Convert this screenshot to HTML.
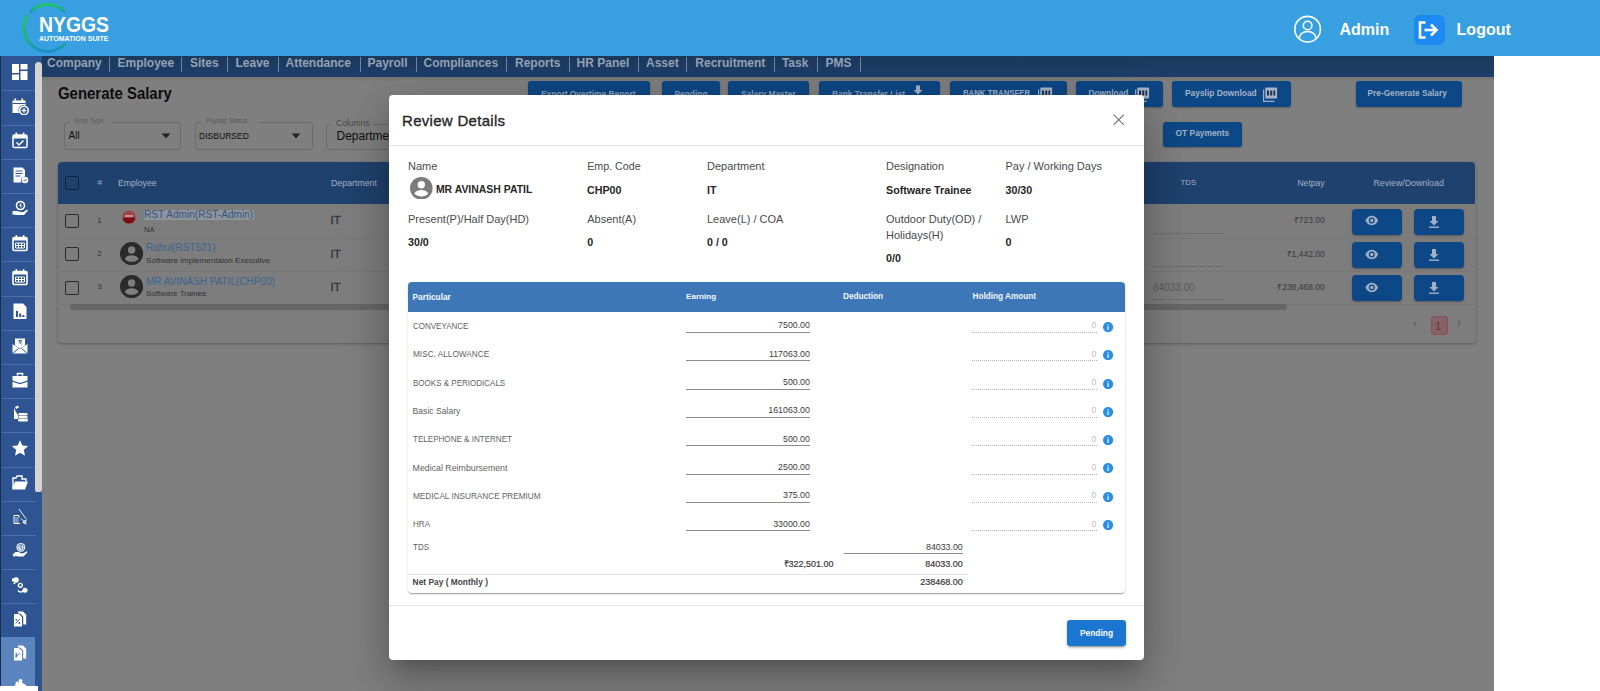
<!DOCTYPE html>
<html><head><meta charset="utf-8">
<style>
*{box-sizing:border-box;margin:0;padding:0}
html,body{width:1600px;height:691px;overflow:hidden;background:#fff;font-family:"Liberation Sans",sans-serif}
.a{position:absolute}
.t{position:absolute;white-space:nowrap;line-height:1}
#hdr{left:0;top:0;width:1600px;height:56px;background:#38a0e1}
#side{left:0;top:56px;width:42px;height:630px;background:#2e5491;border-left:1px solid #1b2b4d;overflow:hidden}
.sc{position:absolute;left:1px;width:34px;height:1px;background:#4b73a8}
.si{position:absolute;left:9.6px;width:18px;height:18px}
#thumb{left:35px;top:62px;width:7px;height:430px;background:#d6d2d1;border-radius:4px 4px 3px 3px}
</style></head><body>
<div id="hdr" class="a">
  <svg class="a" style="left:0;top:0" width="130" height="56" viewBox="0 0 130 56">
    <defs><linearGradient id="lg" x1="0" y1="0" x2="0" y2="1"><stop offset="0" stop-color="#20c46c"/><stop offset="0.65" stop-color="#1bb478"/><stop offset="1" stop-color="#1a8fc6"/></linearGradient></defs>
    <path d="M63.82 11.1 A23.5 23.5 0 0 0 30.88 11.38" fill="none" stroke="url(#lg)" stroke-width="3" stroke-linecap="round"/>
    <path d="M27.15 16.25 A23.5 23.5 0 0 0 64.69 44.03" fill="none" stroke="url(#lg)" stroke-width="3" stroke-linecap="round"/>
  </svg>
  <div class="t" style="left:38.9px;top:13.9px;font-size:22.5px;font-weight:bold;color:#fff;transform:scaleX(0.861);transform-origin:0 0">NYGGS</div>
  <div class="t" style="left:39px;top:35px;font-size:7px;font-weight:bold;color:#fff">AUTOMATION SUITE</div>
  <svg class="a" style="left:1293px;top:15px" width="30" height="30" viewBox="0 0 30 30">
    <circle cx="14.6" cy="14.2" r="12.8" fill="none" stroke="#fff" stroke-width="1.6"/>
    <circle cx="14.6" cy="10.5" r="4.3" fill="none" stroke="#fff" stroke-width="1.6"/>
    <path d="M6 23.5 C7 18.5 10.5 16.5 14.6 16.5 C18.7 16.5 22.2 18.5 23.2 23.5" fill="none" stroke="#fff" stroke-width="1.6"/>
  </svg>
  <div class="t" style="left:1339.4px;top:21.8px;font-size:16px;font-weight:bold;color:#fff">Admin</div>
  <div class="a" style="left:1413.5px;top:14.5px;width:31px;height:30px;background:#1d8af3;border-radius:6px"></div>
  <svg class="a" style="left:1413.5px;top:14.5px" width="31" height="30" viewBox="0 0 31 30">
    <path d="M11.5 7.5 H6 V22.5 H11.5" fill="none" stroke="#fff" stroke-width="2.6"/>
    <path d="M10.5 15 H21" fill="none" stroke="#fff" stroke-width="2.6"/>
    <path d="M17 9.5 L22.5 15 L17 20.5" fill="none" stroke="#fff" stroke-width="2.6"/>
  </svg>
  <div class="t" style="left:1456.6px;top:21.8px;font-size:16px;font-weight:bold;color:#fff">Logout</div>
</div>
<div class="a" style="left:42.0px;top:56.0px;width:1452.0px;height:635.0px;background:#7f7f7f"></div>
<div class="a" style="left:42.0px;top:76.5px;width:1452.0px;height:4.0px;background:linear-gradient(#737374,#7f7f7f)"></div>
<div class="a" style="left:42.0px;top:56.0px;width:1452.0px;height:20.5px;background:linear-gradient(#1b395a,#1e3e6c)"></div>
<div class="t" style="left:47.0px;top:57.1px;font-size:12px;font-weight:bold;color:#93a2b5;">Company</div>
<div class="t" style="left:117.5px;top:57.1px;font-size:12px;font-weight:bold;color:#93a2b5;">Employee</div>
<div class="t" style="left:190.0px;top:57.1px;font-size:12px;font-weight:bold;color:#93a2b5;">Sites</div>
<div class="t" style="left:235.5px;top:57.1px;font-size:12px;font-weight:bold;color:#93a2b5;">Leave</div>
<div class="t" style="left:285.5px;top:57.1px;font-size:12px;font-weight:bold;color:#93a2b5;">Attendance</div>
<div class="t" style="left:367.5px;top:57.1px;font-size:12px;font-weight:bold;color:#93a2b5;">Payroll</div>
<div class="t" style="left:423.5px;top:57.1px;font-size:12px;font-weight:bold;color:#93a2b5;">Compliances</div>
<div class="t" style="left:515.0px;top:57.1px;font-size:12px;font-weight:bold;color:#93a2b5;">Reports</div>
<div class="t" style="left:576.6px;top:57.1px;font-size:12px;font-weight:bold;color:#93a2b5;">HR Panel</div>
<div class="t" style="left:646.0px;top:57.1px;font-size:12px;font-weight:bold;color:#93a2b5;">Asset</div>
<div class="t" style="left:695.3px;top:57.1px;font-size:12px;font-weight:bold;color:#93a2b5;">Recruitment</div>
<div class="t" style="left:781.9px;top:57.1px;font-size:12px;font-weight:bold;color:#93a2b5;">Task</div>
<div class="t" style="left:825.6px;top:57.1px;font-size:12px;font-weight:bold;color:#93a2b5;">PMS</div>
<div class="a" style="left:109.2px;top:57.0px;width:1.0px;height:15.0px;background:#6f86a3"></div>
<div class="a" style="left:181.2px;top:57.0px;width:1.0px;height:15.0px;background:#6f86a3"></div>
<div class="a" style="left:227.0px;top:57.0px;width:1.0px;height:15.0px;background:#6f86a3"></div>
<div class="a" style="left:277.5px;top:57.0px;width:1.0px;height:15.0px;background:#6f86a3"></div>
<div class="a" style="left:359.5px;top:57.0px;width:1.0px;height:15.0px;background:#6f86a3"></div>
<div class="a" style="left:415.5px;top:57.0px;width:1.0px;height:15.0px;background:#6f86a3"></div>
<div class="a" style="left:506.2px;top:57.0px;width:1.0px;height:15.0px;background:#6f86a3"></div>
<div class="a" style="left:568.8px;top:57.0px;width:1.0px;height:15.0px;background:#6f86a3"></div>
<div class="a" style="left:637.5px;top:57.0px;width:1.0px;height:15.0px;background:#6f86a3"></div>
<div class="a" style="left:686.2px;top:57.0px;width:1.0px;height:15.0px;background:#6f86a3"></div>
<div class="a" style="left:773.8px;top:57.0px;width:1.0px;height:15.0px;background:#6f86a3"></div>
<div class="a" style="left:817.2px;top:57.0px;width:1.0px;height:15.0px;background:#6f86a3"></div>
<div class="a" style="left:860.3px;top:57.0px;width:1.0px;height:15.0px;background:#6f86a3"></div>
<div class="t" style="left:58.0px;top:86.1px;font-size:16px;font-weight:bold;color:#0c0c0c;transform:scaleX(0.934);transform-origin:0 0">Generate Salary</div>
<div class="a" style="left:528.0px;top:81.0px;width:122.0px;height:26.0px;background:#0d4785;border-radius:3px;box-shadow:0 1px 2px rgba(0,0,0,.25)"></div>
<div class="a" style="left:662.0px;top:81.0px;width:57.5px;height:26.0px;background:#0d4785;border-radius:3px;box-shadow:0 1px 2px rgba(0,0,0,.25)"></div>
<div class="a" style="left:728.0px;top:81.0px;width:81.0px;height:26.0px;background:#0d4785;border-radius:3px;box-shadow:0 1px 2px rgba(0,0,0,.25)"></div>
<div class="a" style="left:819.0px;top:81.0px;width:121.0px;height:26.0px;background:#0d4785;border-radius:3px;box-shadow:0 1px 2px rgba(0,0,0,.25)"></div>
<div class="a" style="left:949.5px;top:81.0px;width:117.5px;height:26.0px;background:#0d4785;border-radius:3px;box-shadow:0 1px 2px rgba(0,0,0,.25)"></div>
<div class="a" style="left:1076.0px;top:81.0px;width:86.5px;height:26.0px;background:#0d4785;border-radius:3px;box-shadow:0 1px 2px rgba(0,0,0,.25)"></div>
<div class="a" style="left:1172.0px;top:81.0px;width:119.0px;height:26.0px;background:#0d4785;border-radius:3px;box-shadow:0 1px 2px rgba(0,0,0,.25)"></div>
<div class="a" style="left:1356.0px;top:81.0px;width:106.0px;height:26.0px;background:#0d4785;border-radius:3px;box-shadow:0 1px 2px rgba(0,0,0,.25)"></div>
<div class="a" style="left:1163.0px;top:122.0px;width:79.0px;height:25.0px;background:#0d4785;border-radius:3px;box-shadow:0 1px 2px rgba(0,0,0,.25)"></div>
<div class="t" style="left:1185.0px;top:89.3px;font-size:8.4px;font-weight:bold;color:#a2b2c7;">Payslip Download</div>
<div class="t" style="left:1175.6px;top:129.2px;font-size:8.4px;font-weight:bold;color:#a2b2c7;">OT Payments</div>
<div class="t" style="left:1367.5px;top:89.4px;font-size:8.3px;font-weight:bold;color:#a2b2c7;">Pre-Generate Salary</div>
<div class="t" style="left:1088.4px;top:89.3px;font-size:8.4px;font-weight:bold;color:#a2b2c7;">Download</div>
<div class="t" style="left:962.5px;top:89.3px;font-size:8.4px;font-weight:bold;color:#a2b2c7;transform:scaleX(0.93);transform-origin:0 0">BANK TRANSFER</div>
<div class="t" style="left:541.0px;top:89.7px;font-size:8.4px;font-weight:bold;color:#8d9eb5;">Export Overtime Report</div>
<div class="t" style="left:674.5px;top:89.7px;font-size:8.4px;font-weight:bold;color:#8d9eb5;">Pending</div>
<div class="t" style="left:741.0px;top:89.7px;font-size:8.4px;font-weight:bold;color:#8d9eb5;">Salary Master</div>
<div class="t" style="left:832.0px;top:89.7px;font-size:8.4px;font-weight:bold;color:#8d9eb5;">Bank Transfer List</div>
<svg class="a" style="left:913px;top:85px" width="10" height="12" viewBox="0 0 10 12"><path d="M3 0.5 h4 v4.5 h2.5 l-4.5 4.5 l-4.5 -4.5 h2.5 z" fill="#a2b2c7"/><rect x="0.5" y="10.3" width="9" height="1.4" fill="#a2b2c7"/></svg>
<svg class="a" style="left:1262.6px;top:86.5px" width="15" height="15" viewBox="0 0 15 15"><path d="M0.6 2.5 V14.4 H11.5" fill="none" stroke="#9fb0c6" stroke-width="1.2"/><rect x="2.3" y="0.6" width="11.8" height="10.8" rx="1" fill="#a6b4c8"/><rect x="4" y="3.5" width="2" height="5" fill="#1e3050"/><rect x="7.2" y="3.5" width="2" height="5" fill="#1e3050"/><rect x="10.4" y="3.5" width="1.8" height="5" fill="#1e3050"/></svg>
<svg class="a" style="left:1134.5px;top:86.5px" width="15" height="15" viewBox="0 0 15 15"><path d="M0.6 2.5 V14.4 H11.5" fill="none" stroke="#9fb0c6" stroke-width="1.2"/><rect x="2.3" y="0.6" width="11.8" height="10.8" rx="1" fill="#a6b4c8"/><rect x="4" y="3.5" width="2" height="5" fill="#1e3050"/><rect x="7.2" y="3.5" width="2" height="5" fill="#1e3050"/><rect x="10.4" y="3.5" width="1.8" height="5" fill="#1e3050"/></svg>
<svg class="a" style="left:1037.5px;top:86.5px" width="15" height="15" viewBox="0 0 15 15"><path d="M0.6 2.5 V14.4 H11.5" fill="none" stroke="#9fb0c6" stroke-width="1.2"/><rect x="2.3" y="0.6" width="11.8" height="10.8" rx="1" fill="#a6b4c8"/><rect x="4" y="3.5" width="2" height="5" fill="#1e3050"/><rect x="7.2" y="3.5" width="2" height="5" fill="#1e3050"/><rect x="10.4" y="3.5" width="1.8" height="5" fill="#1e3050"/></svg>
<div class="a" style="left:64.4px;top:122.0px;width:117.0px;height:27.5px;border:1px solid #6c6c6c;border-radius:3px"></div>
<div class="a" style="left:195.0px;top:122.0px;width:118.0px;height:27.5px;border:1px solid #6c6c6c;border-radius:3px"></div>
<div class="a" style="left:325.5px;top:123.5px;width:80.0px;height:26.0px;border:1px solid #6c6c6c;border-radius:3px"></div>
<div class="a" style="left:70.0px;top:120.0px;width:42.0px;height:4.0px;background:#7f7f7f"></div>
<div class="a" style="left:201.0px;top:120.0px;width:58.0px;height:4.0px;background:#7f7f7f"></div>
<div class="t" style="left:74.5px;top:118.0px;font-size:6.5px;font-weight:normal;color:#5a5a5a;">Emp Type</div>
<div class="t" style="left:206.0px;top:118.0px;font-size:6.5px;font-weight:normal;color:#5a5a5a;">Payslip Status</div>
<div class="t" style="left:68.5px;top:130.7px;font-size:10px;font-weight:normal;color:#111;">All</div>
<div class="t" style="left:199.3px;top:131.6px;font-size:9px;font-weight:normal;color:#111;transform:scaleX(0.95);transform-origin:0 0">DISBURSED</div>
<svg class="a" style="left:161px;top:133px" width="10" height="6"><path d="M0.5 0.5 L9.5 0.5 L5 5.2 Z" fill="#222"/></svg>
<svg class="a" style="left:291px;top:133px" width="10" height="6"><path d="M0.5 0.5 L9.5 0.5 L5 5.2 Z" fill="#222"/></svg>
<div class="a" style="left:331.0px;top:121.0px;width:42.0px;height:4.0px;background:#7f7f7f"></div>
<div class="t" style="left:336.0px;top:119.3px;font-size:8.5px;font-weight:normal;color:#4a4a4a;">Columns</div>
<div class="t" style="left:336.5px;top:130.3px;font-size:12px;font-weight:normal;color:#111;">Departme</div>
<div class="a" style="left:58.0px;top:162.0px;width:1417.5px;height:181.0px;background:#7d7d7d;border-radius:4px;box-shadow:0 1px 3px rgba(0,0,0,.3)"></div>
<div class="a" style="left:57.7px;top:162.3px;width:1417.8px;height:41.7px;background:#1f416e;border-radius:4px 4px 0 0"></div>
<div class="a" style="left:65.0px;top:176.0px;width:14.0px;height:14.0px;border:1.6px solid #0f2340;border-radius:2px"></div>
<div class="t" style="left:97.5px;top:179.1px;font-size:8px;font-weight:normal;color:#a3b0c2;">#</div>
<div class="t" style="left:118.0px;top:178.5px;font-size:8.7px;font-weight:normal;color:#a3b0c2;">Employee</div>
<div class="t" style="left:331.0px;top:178.5px;font-size:8.8px;font-weight:normal;color:#a3b0c2;">Department</div>
<div class="t" style="left:1180.4px;top:179.1px;font-size:8px;font-weight:normal;color:#a3b0c2;">TDS</div>
<div class="t" style="left:1297.4px;top:178.6px;font-size:8.6px;font-weight:normal;color:#a3b0c2;">Netpay</div>
<div class="t" style="left:1373.4px;top:178.5px;font-size:8.8px;font-weight:normal;color:#a3b0c2;">Review/Download</div>
<div class="a" style="left:58.0px;top:237.6px;width:1417.0px;height:1.0px;background:#777"></div>
<div class="a" style="left:58.0px;top:270.8px;width:1417.0px;height:1.0px;background:#777"></div>
<div class="a" style="left:58.0px;top:304.0px;width:1417.0px;height:1.0px;background:#777"></div>
<div class="a" style="left:65.0px;top:213.8px;width:14.0px;height:14.0px;border:1.6px solid #2a2a2a;border-radius:2px"></div>
<div class="t" style="left:97.3px;top:216.6px;font-size:8px;font-weight:normal;color:#333;">1</div>
<div class="t" style="left:330.5px;top:215.3px;font-size:11.5px;font-weight:normal;color:#333;-webkit-text-stroke:0.3px #333">IT</div>
<div class="a" style="left:1352.0px;top:208.5px;width:50.0px;height:26.0px;background:#0d4785;border-radius:4px;box-shadow:0 1px 2px rgba(0,0,0,.3)"></div>
<div class="a" style="left:1414.0px;top:208.5px;width:49.7px;height:26.0px;background:#0d4785;border-radius:4px;box-shadow:0 1px 2px rgba(0,0,0,.3)"></div>
<svg class="a" style="left:1364.3px;top:215.3px" width="15.5" height="11" viewBox="0 0 16 12"><path d="M1 6 C3 2 5.5 0.8 8 0.8 C10.5 0.8 13 2 15 6 C13 10 10.5 11.2 8 11.2 C5.5 11.2 3 10 1 6 Z" fill="#9fb0c6"/><circle cx="8" cy="6" r="3.2" fill="#0d4785"/><circle cx="8" cy="6" r="1.8" fill="#9fb0c6"/></svg>
<svg class="a" style="left:1427.2px;top:214.5px" width="14" height="14" viewBox="0 0 14 14"><path d="M5 1 h4 v5 h2.5 l-4.5 4.5 l-4.5 -4.5 h2.5 z" fill="#9fb0c6"/><rect x="2" y="11.5" width="10" height="1.4" fill="#9fb0c6"/></svg>
<div class="a" style="left:1153.0px;top:232.5px;width:70.0px;height:1.0px;border-top:1px dotted #5c5c5c"></div>
<div class="a" style="left:65.0px;top:247.4px;width:14.0px;height:14.0px;border:1.6px solid #2a2a2a;border-radius:2px"></div>
<div class="t" style="left:97.3px;top:250.2px;font-size:8px;font-weight:normal;color:#333;">2</div>
<div class="t" style="left:330.5px;top:248.9px;font-size:11.5px;font-weight:normal;color:#333;-webkit-text-stroke:0.3px #333">IT</div>
<div class="a" style="left:1352.0px;top:242.1px;width:50.0px;height:26.0px;background:#0d4785;border-radius:4px;box-shadow:0 1px 2px rgba(0,0,0,.3)"></div>
<div class="a" style="left:1414.0px;top:242.1px;width:49.7px;height:26.0px;background:#0d4785;border-radius:4px;box-shadow:0 1px 2px rgba(0,0,0,.3)"></div>
<svg class="a" style="left:1364.3px;top:248.9px" width="15.5" height="11" viewBox="0 0 16 12"><path d="M1 6 C3 2 5.5 0.8 8 0.8 C10.5 0.8 13 2 15 6 C13 10 10.5 11.2 8 11.2 C5.5 11.2 3 10 1 6 Z" fill="#9fb0c6"/><circle cx="8" cy="6" r="3.2" fill="#0d4785"/><circle cx="8" cy="6" r="1.8" fill="#9fb0c6"/></svg>
<svg class="a" style="left:1427.2px;top:248.1px" width="14" height="14" viewBox="0 0 14 14"><path d="M5 1 h4 v5 h2.5 l-4.5 4.5 l-4.5 -4.5 h2.5 z" fill="#9fb0c6"/><rect x="2" y="11.5" width="10" height="1.4" fill="#9fb0c6"/></svg>
<div class="a" style="left:1153.0px;top:266.1px;width:70.0px;height:1.0px;border-top:1px dotted #5c5c5c"></div>
<div class="a" style="left:65.0px;top:280.6px;width:14.0px;height:14.0px;border:1.6px solid #2a2a2a;border-radius:2px"></div>
<div class="t" style="left:97.3px;top:283.4px;font-size:8px;font-weight:normal;color:#333;">3</div>
<div class="t" style="left:330.5px;top:282.1px;font-size:11.5px;font-weight:normal;color:#333;-webkit-text-stroke:0.3px #333">IT</div>
<div class="a" style="left:1352.0px;top:275.3px;width:50.0px;height:26.0px;background:#0d4785;border-radius:4px;box-shadow:0 1px 2px rgba(0,0,0,.3)"></div>
<div class="a" style="left:1414.0px;top:275.3px;width:49.7px;height:26.0px;background:#0d4785;border-radius:4px;box-shadow:0 1px 2px rgba(0,0,0,.3)"></div>
<svg class="a" style="left:1364.3px;top:282.1px" width="15.5" height="11" viewBox="0 0 16 12"><path d="M1 6 C3 2 5.5 0.8 8 0.8 C10.5 0.8 13 2 15 6 C13 10 10.5 11.2 8 11.2 C5.5 11.2 3 10 1 6 Z" fill="#9fb0c6"/><circle cx="8" cy="6" r="3.2" fill="#0d4785"/><circle cx="8" cy="6" r="1.8" fill="#9fb0c6"/></svg>
<svg class="a" style="left:1427.2px;top:281.3px" width="14" height="14" viewBox="0 0 14 14"><path d="M5 1 h4 v5 h2.5 l-4.5 4.5 l-4.5 -4.5 h2.5 z" fill="#9fb0c6"/><rect x="2" y="11.5" width="10" height="1.4" fill="#9fb0c6"/></svg>
<div class="a" style="left:1153.0px;top:299.3px;width:70.0px;height:1.0px;border-top:1px dotted #5c5c5c"></div>
<svg class="a" style="left:122.4px;top:210.4px" width="14" height="14" viewBox="0 0 14 14"><defs><clipPath id="rc"><circle cx="7" cy="7" r="6.6"/></clipPath></defs><g clip-path="url(#rc)"><rect x="0" y="0" width="14" height="7.6" fill="#a24444"/><rect x="0" y="7.6" width="14" height="7" fill="#7a0c16"/><rect x="3" y="5" width="8" height="2" fill="#c89090"/></g></svg>
<div class="a" style="left:143.5px;top:210.2px;width:110.0px;height:10.0px;background:#8d949d"></div>
<div class="t" style="left:144.0px;top:209.8px;font-size:10.1px;font-weight:normal;color:#36567c;">RST Admin(RST-Admin)</div>
<div class="t" style="left:144.0px;top:225.5px;font-size:7.5px;font-weight:normal;color:#333;">NA</div>
<svg class="a" style="left:120.3px;top:242.0px" width="23.2" height="23.2" viewBox="0 0 24 24"><circle cx="12" cy="12" r="12" fill="#2a2a2a"/><circle cx="12" cy="8.3" r="3.8" fill="#7f7f7f"/><path d="M4.8 17.5 C6.5 14.5 9 13.8 12 13.8 C15 13.8 17.5 14.5 19.2 17.5 C17.5 19.6 15 20.5 12 20.5 C9 20.5 6.5 19.6 4.8 17.5 Z" fill="#7f7f7f"/></svg>
<svg class="a" style="left:120.3px;top:275.2px" width="23.2" height="23.2" viewBox="0 0 24 24"><circle cx="12" cy="12" r="12" fill="#2a2a2a"/><circle cx="12" cy="8.3" r="3.8" fill="#7f7f7f"/><path d="M4.8 17.5 C6.5 14.5 9 13.8 12 13.8 C15 13.8 17.5 14.5 19.2 17.5 C17.5 19.6 15 20.5 12 20.5 C9 20.5 6.5 19.6 4.8 17.5 Z" fill="#7f7f7f"/></svg>
<div class="t" style="left:146.0px;top:243.3px;font-size:10px;font-weight:normal;color:#3a6592;">Rahul(RST521)</div>
<div class="t" style="left:146.0px;top:256.9px;font-size:8.1px;font-weight:normal;color:#333;">Software implementaion Executive</div>
<div class="t" style="left:146.0px;top:276.7px;font-size:10px;font-weight:normal;color:#3a6592;">MR AVINASH PATIL(CHP00)</div>
<div class="t" style="left:146.0px;top:290.3px;font-size:8px;font-weight:normal;color:#333;">Software Trainee</div>
<div class="t" style="right:275.3px;top:216.4px;font-size:8.5px;font-weight:normal;color:#3a3a3a;">₹723.00</div>
<div class="t" style="right:275.3px;top:249.6px;font-size:8.5px;font-weight:normal;color:#3a3a3a;">₹1,442.00</div>
<div class="t" style="right:275.3px;top:282.8px;font-size:8.5px;font-weight:normal;color:#3a3a3a;">₹238,468.00</div>
<div class="t" style="left:1153.0px;top:282.5px;font-size:10px;font-weight:normal;color:#5a5a5a;">84033.00</div>
<div class="a" style="left:70.4px;top:304.3px;width:1217.0px;height:5.7px;background:#666;border-radius:3px"></div>
<div class="t" style="left:1413px;top:317px;font-size:12px;color:#5a5a5a">&#8249;</div>
<div class="a" style="left:1430.5px;top:316.0px;width:17.5px;height:18.7px;border:1px solid #9a4a55;border-radius:3px;background:#806468"></div>
<div class="t" style="left:1435.5px;top:321.5px;font-size:10px;font-weight:normal;color:#8a1d2a;">1</div>
<div class="t" style="left:1457px;top:317px;font-size:12px;color:#5a5a5a">&#8250;</div>
<div class="a" style="left:1494.0px;top:56.0px;width:106.0px;height:635.0px;background:#fff"></div><div id="side" class="a">
<div class="a" style="left:0;top:581.3px;width:34px;height:60px;background:#5b83be"></div>
<div class="sc" style="top:34.4px"></div>
<div class="sc" style="top:68.6px"></div>
<div class="sc" style="top:102.8px"></div>
<div class="sc" style="top:137.0px"></div>
<div class="sc" style="top:171.2px"></div>
<div class="sc" style="top:205.4px"></div>
<div class="sc" style="top:239.6px"></div>
<div class="sc" style="top:273.8px"></div>
<div class="sc" style="top:308.0px"></div>
<div class="sc" style="top:342.2px"></div>
<div class="sc" style="top:376.4px"></div>
<div class="sc" style="top:410.6px"></div>
<div class="sc" style="top:444.8px"></div>
<div class="sc" style="top:479.0px"></div>
<div class="sc" style="top:513.2px"></div>
<div class="sc" style="top:547.4px"></div>
<svg class="si" style="top:6.9px" viewBox="0 0 18 18"><rect x="1" y="1" width="7" height="9" fill="#fff"/><rect x="1" y="11.5" width="7" height="5.5" fill="#fff"/><rect x="9.5" y="1" width="7" height="5.5" fill="#fff"/><rect x="9.5" y="8" width="7" height="9" fill="#fff"/></svg>
<svg class="si" style="top:41.1px" viewBox="0 0 18 18"><path d="M1.5 3.5 h13 v5 a5 5 0 0 0 -6 7.5 h-7 z" fill="#fff"/><rect x="3.5" y="1.5" width="1.6" height="3" fill="#fff"/><rect x="10.5" y="1.5" width="1.6" height="3" fill="#fff"/><rect x="1.5" y="6" width="13" height="1" fill="#2e5491"/><circle cx="13" cy="13.5" r="4.2" fill="none" stroke="#fff" stroke-width="1.6"/><path d="M13 11.3 v4.4 M10.8 13.5 h4.4" stroke="#fff" stroke-width="1.4"/></svg>
<svg class="si" style="top:75.3px" viewBox="0 0 18 18"><rect x="2" y="4" width="14" height="12.5" rx="1.5" fill="none" stroke="#fff" stroke-width="1.5"/><rect x="2" y="4" width="14" height="3.5" fill="#fff"/><rect x="4.5" y="1.5" width="1.6" height="3.5" fill="#fff"/><rect x="11.8" y="1.5" width="1.6" height="3.5" fill="#fff"/><path d="M5.5 11.5 l2.5 2.5 l4.5 -4.5" fill="none" stroke="#fff" stroke-width="1.5"/></svg>
<svg class="si" style="top:109.5px" viewBox="0 0 18 18"><path d="M2.5 1.5 h9 l2.5 2.5 v6.5 a4 4 0 0 0 -3.5 6 h-8 z" fill="#fff"/><path d="M4.5 5 h7 M4.5 7.5 h7 M4.5 10 h5" stroke="#2e5491" stroke-width="1"/><circle cx="14" cy="14" r="3.3" fill="#fff"/><path d="M12.5 14 l1.2 1.2 l2 -2" fill="none" stroke="#2e5491" stroke-width="1"/></svg>
<svg class="si" style="top:143.7px" viewBox="0 0 18 18"><circle cx="9.5" cy="5.5" r="4" fill="none" stroke="#fff" stroke-width="1.6"/><path d="M8.5 4 h2.2 M8.5 5.5 h2 M9 5.5 l1.5 2" stroke="#fff" stroke-width="0.9"/><path d="M1.5 11 h4.5 l3.5 1 h3 l3.5 -2.5 l1 1 l-4 4.5 h-6.5 l-5 -0.5 z" fill="#fff"/></svg>
<svg class="si" style="top:177.9px" viewBox="0 0 18 18"><rect x="2" y="3.5" width="14" height="13" rx="1.2" fill="none" stroke="#fff" stroke-width="1.6"/><rect x="2" y="3.5" width="14" height="3" fill="#fff"/><rect x="4.5" y="1.2" width="1.6" height="3.5" fill="#fff"/><rect x="11.8" y="1.2" width="1.6" height="3.5" fill="#fff"/><path d="M4.5 9 h9 v5 h-9 z M7.5 9 v5 M10.5 9 v5 M4.5 11.5 h9" fill="none" stroke="#fff" stroke-width="1"/></svg>
<svg class="si" style="top:212.1px" viewBox="0 0 18 18"><rect x="2" y="3.5" width="14" height="13" rx="1.2" fill="none" stroke="#fff" stroke-width="1.6"/><rect x="2" y="3.5" width="14" height="3" fill="#fff"/><rect x="4.5" y="1.2" width="1.6" height="3.5" fill="#fff"/><rect x="11.8" y="1.2" width="1.6" height="3.5" fill="#fff"/><path d="M4.5 9 h9 v5 h-9 z M7.5 9 v5 M10.5 9 v5 M4.5 11.5 h9" fill="none" stroke="#fff" stroke-width="1"/></svg>
<svg class="si" style="top:246.3px" viewBox="0 0 18 18"><path d="M2.5 1.5 h9.5 l3.5 3.5 v12 h-13 z" fill="#fff"/><rect x="5" y="9" width="2" height="6" fill="#2e5491"/><rect x="8.2" y="11.5" width="2" height="3.5" fill="#2e5491"/><rect x="11.4" y="13" width="2" height="2" fill="#2e5491"/></svg>
<svg class="si" style="top:280.5px" viewBox="0 0 18 18"><path d="M4 1.5 h10 v7 l-5 3 l-5 -3 z" fill="#fff"/><path d="M1.5 7 l7.5 5 l7.5 -5 v9.5 h-15 z" fill="#fff"/><path d="M1.5 16.5 l6 -5 M16.5 16.5 l-6 -5" stroke="#2e5491" stroke-width="1"/><path d="M7.5 3.5 h3.5 M7.5 5 h3.5 M8.5 5 l2 2.5" stroke="#2e5491" stroke-width="0.9"/></svg>
<svg class="si" style="top:314.7px" viewBox="0 0 18 18"><path d="M6.5 4.5 v-2 h5 v2" fill="none" stroke="#fff" stroke-width="1.6"/><path d="M1.5 5 h15 v4.5 l-7.5 2.5 l-7.5 -2.5 z" fill="#fff"/><path d="M1.5 10.8 l7.5 2.5 l7.5 -2.5 v5.7 h-15 z" fill="#fff"/></svg>
<svg class="si" style="top:348.9px" viewBox="0 0 18 18"><path d="M3 3 v11 h4 v-4 l-2 -3 z" fill="#fff"/><path d="M4 2 l3 -1.5 l1 2 l-3 1.5 z" fill="#fff"/><rect x="7.5" y="8" width="9" height="2.5" rx="1.2" fill="#fff"/><rect x="7.5" y="11" width="9" height="2.5" rx="0.5" fill="#fff"/><rect x="7" y="14" width="10" height="2.5" rx="1.2" fill="#fff"/></svg>
<svg class="si" style="top:383.1px" viewBox="0 0 18 18"><path d="M9 1.2 l2.4 5.3 l5.7 0.6 l-4.3 3.9 l1.2 5.7 l-5 -2.9 l-5 2.9 l1.2 -5.7 l-4.3 -3.9 l5.7 -0.6 z" fill="#fff"/></svg>
<svg class="si" style="top:417.3px" viewBox="0 0 18 18"><path d="M2 15 v-10 h3 l1 -2 h5 v3 h4 v2" fill="none" stroke="#fff" stroke-width="1.4"/><path d="M1 16.5 l3 -8 h13 l-3 8 z" fill="#fff"/></svg>
<svg class="si" style="top:451.5px" viewBox="0 0 18 18"><path d="M8 1 L15.5 11.5" stroke="#fff" stroke-width="0.9"/><path d="M3 7.5 h5 v2 M3 7.5 v8 h6" fill="none" stroke="#fff" stroke-width="1"/><path d="M4.2 10 h3.5 M4.2 12 h3.5 M4.2 14 h3.5" stroke="#fff" stroke-width="0.8"/><path d="M10 10.5 l3 3 l2.5 -1 M12 14.5 l3.5 1.5" fill="none" stroke="#fff" stroke-width="1"/><circle cx="13.5" cy="14" r="1.3" fill="none" stroke="#fff" stroke-width="0.8"/></svg>
<svg class="si" style="top:485.7px" viewBox="0 0 18 18"><circle cx="9.8" cy="5.3" r="4.4" fill="#fff"/><circle cx="9.8" cy="5.3" r="3.1" fill="none" stroke="#2e5491" stroke-width="0.7"/><path d="M8.6 3.8 h2.5 M8.6 5 h2.5 M9.3 5 l1.8 2.2" stroke="#2e5491" stroke-width="0.8"/><path d="M1.5 12.5 l3 -2.5 h3.5 l1.5 1.2 h3 l3 -2 l1 1 l-4 4.3 h-5.5 l-2.5 -0.5 l-1.5 1 z" fill="#fff"/></svg>
<svg class="si" style="top:519.9px" viewBox="0 0 18 18"><circle cx="5" cy="4" r="2.8" fill="#fff"/><rect x="1" y="2.5" width="2.5" height="3" fill="#fff"/><circle cx="9.3" cy="9.3" r="2.6" fill="#fff"/><circle cx="9.3" cy="9.3" r="1.2" fill="#2e5491"/><path d="M7 14.5 c1.5 2 4 2 5.5 0.3" fill="none" stroke="#fff" stroke-width="1.5"/><circle cx="14" cy="14.2" r="2.5" fill="#fff"/><path d="M2.5 8 l2 -1.5" stroke="#fff" stroke-width="1.2"/></svg>
<svg class="si" style="top:554.1px" viewBox="0 0 18 18"><path d="M3 4 h5 l3 3 v9.5 h-8 z" fill="#fff"/><path d="M7 1.5 h5 l3.2 3.2 v9.8 h-3 v-8 l-3 -3 h-2.2 z" fill="#fff"/><path d="M4.8 13.5 l4 -4.5" stroke="#2e5491" stroke-width="0.9"/><circle cx="5.3" cy="9.8" r="0.9" fill="#2e5491"/><circle cx="8.3" cy="13" r="0.9" fill="#2e5491"/></svg>
<svg class="si" style="top:588.3px" viewBox="0 0 18 18"><path d="M3 4 h5 l3 3 v9.5 h-8 z" fill="#fff"/><path d="M7 1.5 h5 l3.2 3.2 v9.8 h-3 v-8 l-3 -3 h-2.2 z" fill="#fff"/><path d="M4.8 13.5 l4 -4.5" stroke="#5a84c0" stroke-width="0.9"/><rect x="4.5" y="9" width="1.6" height="4.5" fill="#5a84c0"/></svg>
<svg class="si" style="top:622.5px" viewBox="0 0 18 18"><path d="M3 9 c0 -3 2 -4.5 4 -4.5 c1 -2 4 -2 5 0 c2 0 4 2 4 4.5 z" fill="#fff"/><circle cx="9.5" cy="2" r="2" fill="#fff"/><circle cx="6" cy="4" r="1.5" fill="#fff"/></svg>
</div>
<div id="thumb" class="a"></div>
<div class="a" style="left:0;top:685.6px;width:38px;height:6px;background:#fff"></div>
<div class="a" style="left:38px;top:685.6px;width:4px;height:6px;background:#2e5491"></div><div class="a" style="left:389.0px;top:95.0px;width:755.0px;height:564.7px;background:#fff;border-radius:4px;box-shadow:0 11px 15px -7px rgba(0,0,0,.2),0 24px 38px 3px rgba(0,0,0,.14),0 9px 46px 8px rgba(0,0,0,.12)"></div>
<div class="t" style="left:402.0px;top:112.7px;font-size:15px;font-weight:normal;color:#262626;-webkit-text-stroke:0.35px #262626;letter-spacing:0.3px">Review Details</div>
<svg class="a" style="left:1113px;top:114.3px" width="11.5" height="11.5" viewBox="0 0 11.5 11.5"><path d="M0.6 0.6 L10.9 10.9 M10.9 0.6 L0.6 10.9" stroke="#7a7a7a" stroke-width="1.3"/></svg>
<div class="a" style="left:389.0px;top:144.6px;width:755.0px;height:1.0px;background:#e3e3e3"></div>
<div class="t" style="left:408.0px;top:161.2px;font-size:11px;font-weight:normal;color:#4a4a4a;">Name</div>
<div class="t" style="left:587.2px;top:161.4px;font-size:10.7px;font-weight:normal;color:#4a4a4a;">Emp. Code</div>
<div class="t" style="left:707.0px;top:161.2px;font-size:11px;font-weight:normal;color:#4a4a4a;">Department</div>
<div class="t" style="left:886.0px;top:161.2px;font-size:11px;font-weight:normal;color:#4a4a4a;">Designation</div>
<div class="t" style="left:1005.5px;top:161.2px;font-size:11px;font-weight:normal;color:#4a4a4a;">Pay / Working Days</div>
<svg class="a" style="left:410.1px;top:176.7px" width="22.6" height="22.6" viewBox="0 0 24 24"><circle cx="12" cy="12" r="12" fill="#7c7c7c"/><circle cx="12" cy="8.2" r="3.9" fill="#fff"/><path d="M4.6 17.6 C6.3 14.6 9 13.9 12 13.9 C15 13.9 17.7 14.6 19.4 17.6 C17.7 19.8 15 20.8 12 20.8 C9 20.8 6.3 19.8 4.6 17.6 Z" fill="#fff"/></svg>
<div class="t" style="left:435.9px;top:185.0px;font-size:10.45px;font-weight:bold;color:#262626;">MR AVINASH PATIL</div>
<div class="t" style="left:587.0px;top:184.7px;font-size:10.7px;font-weight:bold;color:#262626;">CHP00</div>
<div class="t" style="left:707.0px;top:184.7px;font-size:10.7px;font-weight:bold;color:#262626;">IT</div>
<div class="t" style="left:886.0px;top:184.7px;font-size:10.7px;font-weight:bold;color:#262626;">Software Trainee</div>
<div class="t" style="left:1005.5px;top:184.7px;font-size:10.7px;font-weight:bold;color:#262626;">30/30</div>
<div class="t" style="left:408.0px;top:213.9px;font-size:11px;font-weight:normal;color:#4a4a4a;">Present(P)/Half Day(HD)</div>
<div class="t" style="left:587.2px;top:213.9px;font-size:11px;font-weight:normal;color:#4a4a4a;">Absent(A)</div>
<div class="t" style="left:707.0px;top:213.9px;font-size:11px;font-weight:normal;color:#4a4a4a;">Leave(L) / COA</div>
<div class="t" style="left:886.0px;top:213.9px;font-size:11px;font-weight:normal;color:#4a4a4a;">Outdoor Duty(OD) /</div>
<div class="t" style="left:886.0px;top:229.5px;font-size:11px;font-weight:normal;color:#4a4a4a;">Holidays(H)</div>
<div class="t" style="left:1005.5px;top:213.9px;font-size:11px;font-weight:normal;color:#4a4a4a;">LWP</div>
<div class="t" style="left:408.0px;top:237.4px;font-size:10.7px;font-weight:bold;color:#262626;">30/0</div>
<div class="t" style="left:587.2px;top:237.4px;font-size:10.7px;font-weight:bold;color:#262626;">0</div>
<div class="t" style="left:707.0px;top:237.4px;font-size:10.7px;font-weight:bold;color:#262626;">0 / 0</div>
<div class="t" style="left:886.0px;top:252.9px;font-size:10.7px;font-weight:bold;color:#262626;">0/0</div>
<div class="t" style="left:1005.5px;top:237.4px;font-size:10.7px;font-weight:bold;color:#262626;">0</div>
<div class="a" style="left:407.5px;top:282.0px;width:717.7px;height:310.5px;background:#fff;border-radius:4px;box-shadow:0 2px 1px -1px rgba(0,0,0,.2),0 1px 1px 0 rgba(0,0,0,.14),0 1px 3px 0 rgba(0,0,0,.12)"></div>
<div class="a" style="left:407.5px;top:282.0px;width:717.7px;height:30.2px;background:#3d77b7;border-radius:4px 4px 0 0"></div>
<div class="t" style="left:412.5px;top:292.9px;font-size:8.3px;font-weight:bold;color:#f4f8fc;">Particular</div>
<div class="t" style="left:686.0px;top:293.0px;font-size:8.1px;font-weight:bold;color:#f4f8fc;">Earning</div>
<div class="t" style="left:843.1px;top:293.0px;font-size:8.2px;font-weight:bold;color:#f4f8fc;">Deduction</div>
<div class="t" style="left:972.6px;top:293.0px;font-size:8.2px;font-weight:bold;color:#f4f8fc;">Holding Amount</div>
<div class="t" style="left:412.6px;top:321.9px;font-size:9.3px;font-weight:normal;color:#5f5f5f;transform:scaleX(0.86);transform-origin:0 0">CONVEYANCE</div>
<div class="a" style="left:686.0px;top:332.0px;width:124.4px;height:1.0px;background:#8c8c8c"></div>
<div class="t" style="right:790.1px;top:321.4px;font-size:8.8px;font-weight:normal;color:#3c3c3c;">7500.00</div>
<div class="a" style="left:972.2px;top:332.0px;width:124.8px;height:1.0px;border-top:1px dotted #b0b0b0"></div>
<div class="t" style="right:503.8px;top:321.4px;font-size:8.5px;font-weight:normal;color:#bdbdbd;">0</div>
<svg class="a" style="left:1103.4px;top:321.9px" width="10.2" height="10.2" viewBox="0 0 10 10"><circle cx="5" cy="5" r="5" fill="#2a8de6"/><rect x="4.4" y="4.2" width="1.2" height="3.6" fill="#fff"/><circle cx="5" cy="2.8" r="0.7" fill="#fff"/></svg>
<div class="t" style="left:412.6px;top:350.2px;font-size:9.3px;font-weight:normal;color:#5f5f5f;transform:scaleX(0.887);transform-origin:0 0">MISC. ALLOWANCE</div>
<div class="a" style="left:686.0px;top:360.3px;width:124.4px;height:1.0px;background:#8c8c8c"></div>
<div class="t" style="right:790.1px;top:349.7px;font-size:8.8px;font-weight:normal;color:#3c3c3c;">117063.00</div>
<div class="a" style="left:972.2px;top:360.3px;width:124.8px;height:1.0px;border-top:1px dotted #b0b0b0"></div>
<div class="t" style="right:503.8px;top:349.7px;font-size:8.5px;font-weight:normal;color:#bdbdbd;">0</div>
<svg class="a" style="left:1103.4px;top:350.2px" width="10.2" height="10.2" viewBox="0 0 10 10"><circle cx="5" cy="5" r="5" fill="#2a8de6"/><rect x="4.4" y="4.2" width="1.2" height="3.6" fill="#fff"/><circle cx="5" cy="2.8" r="0.7" fill="#fff"/></svg>
<div class="t" style="left:412.6px;top:378.5px;font-size:9.3px;font-weight:normal;color:#5f5f5f;transform:scaleX(0.862);transform-origin:0 0">BOOKS &amp; PERIODICALS</div>
<div class="a" style="left:686.0px;top:388.6px;width:124.4px;height:1.0px;background:#8c8c8c"></div>
<div class="t" style="right:790.1px;top:378.0px;font-size:8.8px;font-weight:normal;color:#3c3c3c;">500.00</div>
<div class="a" style="left:972.2px;top:388.6px;width:124.8px;height:1.0px;border-top:1px dotted #b0b0b0"></div>
<div class="t" style="right:503.8px;top:378.0px;font-size:8.5px;font-weight:normal;color:#bdbdbd;">0</div>
<svg class="a" style="left:1103.4px;top:378.5px" width="10.2" height="10.2" viewBox="0 0 10 10"><circle cx="5" cy="5" r="5" fill="#2a8de6"/><rect x="4.4" y="4.2" width="1.2" height="3.6" fill="#fff"/><circle cx="5" cy="2.8" r="0.7" fill="#fff"/></svg>
<div class="t" style="left:412.6px;top:407.4px;font-size:8.6px;font-weight:normal;color:#5f5f5f;transform:scaleX(1);transform-origin:0 0">Basic Salary</div>
<div class="a" style="left:686.0px;top:416.9px;width:124.4px;height:1.0px;background:#8c8c8c"></div>
<div class="t" style="right:790.1px;top:406.3px;font-size:8.8px;font-weight:normal;color:#3c3c3c;">161063.00</div>
<div class="a" style="left:972.2px;top:416.9px;width:124.8px;height:1.0px;border-top:1px dotted #b0b0b0"></div>
<div class="t" style="right:503.8px;top:406.3px;font-size:8.5px;font-weight:normal;color:#bdbdbd;">0</div>
<svg class="a" style="left:1103.4px;top:406.8px" width="10.2" height="10.2" viewBox="0 0 10 10"><circle cx="5" cy="5" r="5" fill="#2a8de6"/><rect x="4.4" y="4.2" width="1.2" height="3.6" fill="#fff"/><circle cx="5" cy="2.8" r="0.7" fill="#fff"/></svg>
<div class="t" style="left:412.6px;top:435.1px;font-size:9.3px;font-weight:normal;color:#5f5f5f;transform:scaleX(0.867);transform-origin:0 0">TELEPHONE &amp; INTERNET</div>
<div class="a" style="left:686.0px;top:445.2px;width:124.4px;height:1.0px;background:#8c8c8c"></div>
<div class="t" style="right:790.1px;top:434.6px;font-size:8.8px;font-weight:normal;color:#3c3c3c;">500.00</div>
<div class="a" style="left:972.2px;top:445.2px;width:124.8px;height:1.0px;border-top:1px dotted #b0b0b0"></div>
<div class="t" style="right:503.8px;top:434.6px;font-size:8.5px;font-weight:normal;color:#bdbdbd;">0</div>
<svg class="a" style="left:1103.4px;top:435.1px" width="10.2" height="10.2" viewBox="0 0 10 10"><circle cx="5" cy="5" r="5" fill="#2a8de6"/><rect x="4.4" y="4.2" width="1.2" height="3.6" fill="#fff"/><circle cx="5" cy="2.8" r="0.7" fill="#fff"/></svg>
<div class="t" style="left:412.6px;top:463.9px;font-size:8.8px;font-weight:normal;color:#5f5f5f;transform:scaleX(1);transform-origin:0 0">Medical Reimbursement</div>
<div class="a" style="left:686.0px;top:473.5px;width:124.4px;height:1.0px;background:#8c8c8c"></div>
<div class="t" style="right:790.1px;top:462.9px;font-size:8.8px;font-weight:normal;color:#3c3c3c;">2500.00</div>
<div class="a" style="left:972.2px;top:473.5px;width:124.8px;height:1.0px;border-top:1px dotted #b0b0b0"></div>
<div class="t" style="right:503.8px;top:462.9px;font-size:8.5px;font-weight:normal;color:#bdbdbd;">0</div>
<svg class="a" style="left:1103.4px;top:463.4px" width="10.2" height="10.2" viewBox="0 0 10 10"><circle cx="5" cy="5" r="5" fill="#2a8de6"/><rect x="4.4" y="4.2" width="1.2" height="3.6" fill="#fff"/><circle cx="5" cy="2.8" r="0.7" fill="#fff"/></svg>
<div class="t" style="left:412.6px;top:491.7px;font-size:9.3px;font-weight:normal;color:#5f5f5f;transform:scaleX(0.881);transform-origin:0 0">MEDICAL INSURANCE PREMIUM</div>
<div class="a" style="left:686.0px;top:501.8px;width:124.4px;height:1.0px;background:#8c8c8c"></div>
<div class="t" style="right:790.1px;top:491.2px;font-size:8.8px;font-weight:normal;color:#3c3c3c;">375.00</div>
<div class="a" style="left:972.2px;top:501.8px;width:124.8px;height:1.0px;border-top:1px dotted #b0b0b0"></div>
<div class="t" style="right:503.8px;top:491.2px;font-size:8.5px;font-weight:normal;color:#bdbdbd;">0</div>
<svg class="a" style="left:1103.4px;top:491.7px" width="10.2" height="10.2" viewBox="0 0 10 10"><circle cx="5" cy="5" r="5" fill="#2a8de6"/><rect x="4.4" y="4.2" width="1.2" height="3.6" fill="#fff"/><circle cx="5" cy="2.8" r="0.7" fill="#fff"/></svg>
<div class="t" style="left:412.6px;top:520.0px;font-size:9.3px;font-weight:normal;color:#5f5f5f;transform:scaleX(0.867);transform-origin:0 0">HRA</div>
<div class="a" style="left:686.0px;top:530.1px;width:124.4px;height:1.0px;background:#8c8c8c"></div>
<div class="t" style="right:790.1px;top:519.5px;font-size:8.8px;font-weight:normal;color:#3c3c3c;">33000.00</div>
<div class="a" style="left:972.2px;top:530.1px;width:124.8px;height:1.0px;border-top:1px dotted #b0b0b0"></div>
<div class="t" style="right:503.8px;top:519.5px;font-size:8.5px;font-weight:normal;color:#bdbdbd;">0</div>
<svg class="a" style="left:1103.4px;top:520.0px" width="10.2" height="10.2" viewBox="0 0 10 10"><circle cx="5" cy="5" r="5" fill="#2a8de6"/><rect x="4.4" y="4.2" width="1.2" height="3.6" fill="#fff"/><circle cx="5" cy="2.8" r="0.7" fill="#fff"/></svg>
<div class="t" style="left:412.6px;top:542.6px;font-size:9.3px;font-weight:normal;color:#5f5f5f;transform:scaleX(0.86);transform-origin:0 0">TDS</div>
<div class="a" style="left:844.2px;top:553.0px;width:118.7px;height:1.0px;background:#8c8c8c"></div>
<div class="t" style="right:637.3px;top:542.6px;font-size:8.8px;font-weight:normal;color:#3c3c3c;">84033.00</div>
<div class="t" style="right:766.4px;top:559.5px;font-size:9px;font-weight:normal;color:#3a3a3a;-webkit-text-stroke:0.2px #3a3a3a">₹322,501.00</div>
<div class="t" style="right:637.3px;top:559.5px;font-size:9px;font-weight:normal;color:#3a3a3a;-webkit-text-stroke:0.2px #3a3a3a">84033.00</div>
<div class="a" style="left:407.5px;top:573.5px;width:560.5px;height:1.0px;background:#e6e6e6"></div>
<div class="t" style="left:412.6px;top:578.3px;font-size:8.4px;font-weight:bold;color:#444;">Net Pay ( Monthly )</div>
<div class="t" style="right:637.3px;top:577.6px;font-size:9px;font-weight:normal;color:#3a3a3a;-webkit-text-stroke:0.2px #3a3a3a">238468.00</div>
<div class="a" style="left:389.0px;top:605.0px;width:755.0px;height:1.0px;background:#e3e3e3"></div>
<div class="a" style="left:1067.0px;top:620.0px;width:59.0px;height:26.0px;background:#1b76d2;border-radius:3px;box-shadow:0 3px 1px -2px rgba(0,0,0,.2),0 2px 2px 0 rgba(0,0,0,.14),0 1px 5px 0 rgba(0,0,0,.12)"></div>
<div class="t" style="left:1080.0px;top:628.5px;font-size:8.4px;font-weight:bold;color:#fff;">Pending</div></body></html>
